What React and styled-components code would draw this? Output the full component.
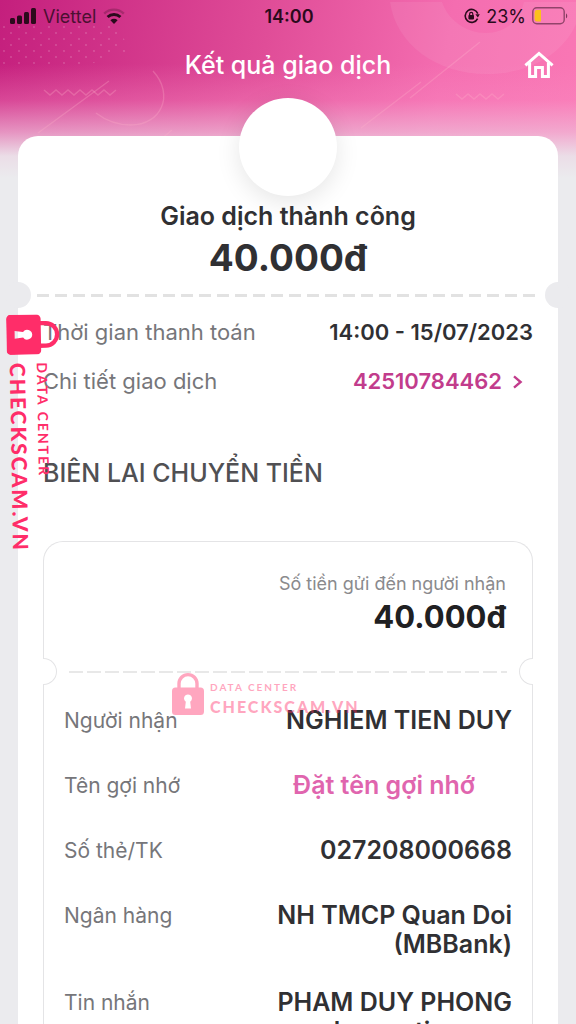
import React from "react";
import styled, { createGlobalStyle } from "styled-components";

const GlobalStyle = createGlobalStyle`
  * {
    box-sizing: border-box;
  }

  body {
    margin: 0;
    background: #ebebee;
    font-family: "Inter", "Roboto", sans-serif;
    color: #303033;
  }
`;

const receiptRows = [
  { label: "Người nhận", value: "NGHIEM TIEN DUY" },
  { label: "Tên gợi nhớ", action: "Đặt tên gợi nhớ" },
  { label: "Số thẻ/TK", value: "027208000668" },
  { label: "Ngân hàng", value: "NH TMCP Quan Doi (MBBank)" },
  { label: "Tin nhắn", value: "PHAM DUY PHONG chuyen tien qua MoMo" },
];

const SignalIcon = () => (
  <svg width="26" height="16" viewBox="0 0 26 16" fill="currentColor" aria-hidden="true">
    <rect x="0" y="10" width="5" height="6" rx="1.5" />
    <rect x="7" y="7.5" width="5" height="8.5" rx="1.5" />
    <rect x="14" y="4" width="5" height="12" rx="1.5" />
    <rect x="21" y="0" width="5" height="16" rx="1.5" />
  </svg>
);

const WifiIcon = () => (
  <svg width="22" height="16" viewBox="0 0 22 16" fill="none" stroke="currentColor" aria-hidden="true">
    <path d="M1.2 5.6a14 14 0 0 1 19.6 0" strokeWidth="2.4" opacity="0.25" />
    <path d="M4.6 9a9.2 9.2 0 0 1 12.8 0" strokeWidth="3" />
    <path d="M11 16l-3.6-3.8a5.2 5.2 0 0 1 7.2 0z" fill="currentColor" stroke="none" />
  </svg>
);

const RotationLockIcon = () => (
  <svg width="16" height="16" viewBox="0 0 16 16" fill="none" stroke="currentColor" aria-hidden="true">
    <path d="M13.6 10.6A6.5 6.5 0 1 1 13.8 5.6" strokeWidth="1.6" />
    <path d="M11.4 6.2h4.4l-2 3.4z" fill="currentColor" stroke="none" />
    <rect x="4.4" y="7" width="5.6" height="4.4" rx="0.8" fill="currentColor" stroke="none" />
    <path d="M5.6 7.4V6a1.6 1.6 0 0 1 3.2 0v1.4" strokeWidth="1.2" />
  </svg>
);

const BatteryIcon = () => (
  <svg width="36" height="18" viewBox="0 0 36 18" fill="none" aria-hidden="true">
    <rect x="0.8" y="0.8" width="31.4" height="16" rx="4" stroke="#2b0a1c" strokeOpacity="0.5" strokeWidth="1.4" />
    <path d="M5 3h4v11.6H5a2.4 2.4 0 0 1-2.4-2.4V5.4A2.4 2.4 0 0 1 5 3z" fill="#fbc11c" />
    <path d="M34 6.4c1.6.6 1.6 4.2 0 4.8z" fill="#2b0a1c" fillOpacity="0.6" />
  </svg>
);

const HomeIcon = () => (
  <svg width="30" height="28" viewBox="0 0 30 28" fill="none" stroke="currentColor" strokeWidth="3" aria-hidden="true">
    <path d="M1.4 14.4L15 2.4 28.6 14.4" />
    <path d="M5.6 11.4v14h6v-9h6.8v9h6v-14" />
  </svg>
);

const ChevronIcon = () => (
  <svg width="11" height="14" viewBox="0 0 11 14" fill="none" stroke="currentColor" strokeWidth="2.4" aria-hidden="true">
    <path d="M2 1.4L8.6 7 2 12.6" />
  </svg>
);

const LockIcon = () => (
  <LockSvg viewBox="0 0 32 43" aria-hidden="true">
    <path d="M7 17V11.6a9 9 0 0 1 18 0V17" fill="none" stroke="currentColor" strokeWidth="3.4" />
    <path
      fillRule="evenodd"
      fill="currentColor"
      d="M3.5 15.5h25a3.5 3.5 0 0 1 3.5 3.5V39.5a3.5 3.5 0 0 1-3.5 3.5H3.5A3.5 3.5 0 0 1 0 39.5V19a3.5 3.5 0 0 1 3.5-3.5zM16 22.4a4 4 0 0 0-2.2 7.3L13 36.4h6l-.8-6.7A4 4 0 0 0 16 22.4z"
    />
  </LockSvg>
);

const HeaderPattern = () => (
  <Pattern viewBox="0 0 576 176" preserveAspectRatio="xMidYMin slice" aria-hidden="true">
    <defs>
      <pattern id="dots" width="15" height="12" patternUnits="userSpaceOnUse">
        <circle cx="4" cy="3" r="0.9" fill="#fff" />
        <circle cx="11" cy="9" r="0.9" fill="#fff" />
      </pattern>
    </defs>
    <path d="M0 26h112l22 24-50 16H0z" fill="url(#dots)" opacity="0.2" />
    <g fill="none" stroke="#ffb3c8" strokeOpacity="0.28" strokeWidth="1.4">
      <path d="M153 71c22 24 8 54-22 54-14 0-26-5-35-12" />
      <path d="M109 81L38 133M172 130l-12 10M480 42l-70 56M421 82l-60 46" />
      <path d="M44 90l6 5 6-5 6 5 6-5 6 5 6-5 6 5 6-5 6 5 6-5 6 5 6-5" />
      <path d="M456 94l6 5 6-5 6 5 6-5 6 5 6-5 6 5 6-5" />
    </g>
    <path d="M390 2c6 42 46 72 97 72 42 0 76-20 89-50V2h-52c-4 18-18 31-38 31s-38-13-44-31z" fill="#fff" opacity="0.07" />
  </Pattern>
);

const Watermark = ({ vertical }) => (
  <Mark $vertical={vertical}>
    <LockIcon />
    <MarkText>
      <MarkTop $vertical={vertical}>DATA CENTER</MarkTop>
      <MarkName $vertical={vertical}>CHECKSCAM.VN</MarkName>
    </MarkText>
  </Mark>
);

const App = () => (
  <Screen>
    <GlobalStyle />
    <HeaderPattern />
    <StatusBar>
      <StatusGroup>
        <SignalIcon />
        <Carrier>Viettel</Carrier>
        <WifiIcon />
      </StatusGroup>
      <Clock>14:00</Clock>
      <StatusGroup $end>
        <RotationLockIcon />
        <span>23%</span>
        <BatteryIcon />
      </StatusGroup>
    </StatusBar>

    <TitleBar>
      <Title>Kết quả giao dịch</Title>
      <HomeButton type="button" aria-label="Trang chủ">
        <HomeIcon />
      </HomeButton>
    </TitleBar>

    <Card>
      <Avatar />
      <Status>Giao dịch thành công</Status>
      <Total>40.000đ</Total>
      <Tear>
        <Notch />
        <Dashes />
        <Notch />
      </Tear>

      <Details>
        <Row>
          <Label $large>Thời gian thanh toán</Label>
          <Value>14:00 - 15/07/2023</Value>
        </Row>
        <Row>
          <Label $large>Chi tiết giao dịch</Label>
          <Value>
            <DetailLink href="#detail">
              42510784462
              <ChevronIcon />
            </DetailLink>
          </Value>
        </Row>
      </Details>

      <SectionTitle>BIÊN LAI CHUYỂN TIỀN</SectionTitle>

      <Receipt>
        <SentLabel>Số tiền gửi đến người nhận</SentLabel>
        <SentAmount>40.000đ</SentAmount>
        <ReceiptTear>
          <OutlineNotch />
          <ThinDashes />
          <OutlineNotch $right />
        </ReceiptTear>
        <ReceiptList>
          {receiptRows.map((row) => (
            <ReceiptRow key={row.label}>
              <Label>{row.label}</Label>
              <Value $large>
                {row.action ? <NameButton type="button">{row.action}</NameButton> : row.value}
              </Value>
            </ReceiptRow>
          ))}
        </ReceiptList>
        <Watermark />
      </Receipt>
    </Card>
    <Watermark vertical />
  </Screen>
);

const Screen = styled.main`
  position: relative;
  height: 100vh;
  overflow: hidden auto;
  scrollbar-width: none;
  background:
    linear-gradient(
        to bottom,
        rgba(250, 130, 190, 0) 64px,
        rgba(250, 140, 195, 0.35) 100px,
        rgba(240, 185, 215, 0.75) 132px,
        #ebdde7 156px,
        #ebebee 178px
      )
      top / 100% 178px no-repeat,
    linear-gradient(100deg, #c41f7d 0%, #e04d98 45%, #f46db0 75%, #fa78b5 100%) top / 100% 177px no-repeat,
    #ebebee;
`;

const Pattern = styled.svg`
  position: absolute;
  top: 0;
  left: 0;
  width: 100%;
  height: 176px;
`;

const StatusBar = styled.div`
  position: relative;
  display: grid;
  grid-template-columns: 1fr auto 1fr;
  align-items: center;
  height: 32px;
  padding: 0 8px 0 10px;
  font-size: 18px;
  color: #2b0a1c;
`;

const StatusGroup = styled.div`
  display: flex;
  align-items: center;
  justify-content: ${({ $end }) => ($end ? "flex-end" : "flex-start")};
  gap: ${({ $end }) => ($end ? "6px" : "7px")};
`;

const Carrier = styled.span`
  opacity: 0.8;
`;

const Clock = styled.span`
  font-weight: 600;
`;

const TitleBar = styled.header`
  position: relative;
  display: grid;
  grid-template-columns: 1fr auto 1fr;
  align-items: center;
  height: 66px;
  padding: 0 22px;
  color: #fff;
`;

const Title = styled.h1`
  grid-column: 2;
  margin: 0;
  font-size: 25px;
  font-weight: 500;
`;

const HomeButton = styled.button`
  justify-self: end;
  display: flex;
  padding: 0;
  border: none;
  background: none;
  color: inherit;
  cursor: pointer;
`;

const Card = styled.section`
  position: relative;
  display: flex;
  flex-direction: column;
  margin: 38px 18px 0;
  border-radius: 20px 20px 0 0;
  background: #fff;
`;

const Avatar = styled.div`
  align-self: center;
  width: 98px;
  height: 98px;
  margin-top: -38px;
  border-radius: 50%;
  background: #fff;
  box-shadow: 0 6px 24px rgba(0, 0, 0, 0.1);
`;

const Status = styled.p`
  position: relative;
  margin: 4px 0 0;
  text-align: center;
  font-size: 25px;
  font-weight: 600;
  line-height: 32px;
`;

const Total = styled.p`
  margin: 4px 0 0;
  text-align: center;
  font-size: 37px;
  font-weight: 700;
  line-height: 44px;
`;

const Tear = styled.div`
  display: flex;
  align-items: center;
  justify-content: space-between;
  gap: 6px;
  margin: 2px -13px 0;
`;

const Notch = styled.span`
  width: 26px;
  height: 26px;
  border-radius: 50%;
  background: #ebebee;
`;

const Dashes = styled.span`
  flex: 1;
  height: 3px;
  background: repeating-linear-gradient(to right, #e2e2e2 0 12px, transparent 12px 18px);
`;

const Details = styled.dl`
  display: flex;
  flex-direction: column;
  gap: 20px;
  margin: 10px 25px 0;
`;

const Row = styled.div`
  display: flex;
  justify-content: space-between;
  line-height: 29px;
`;

const ReceiptRow = styled(Row)`
  min-height: 36px;
`;

const Label = styled.dt`
  font-size: ${({ $large }) => ($large ? "22px" : "21px")};
  color: #76767a;
`;

const Value = styled.dd`
  max-width: ${({ $large }) => ($large ? "60%" : "none")};
  margin: 0;
  text-align: right;
  font-size: ${({ $large }) => ($large ? "25px" : "22px")};
  font-weight: 600;
`;

const DetailLink = styled.a`
  display: flex;
  align-items: center;
  gap: 10px;
  padding-right: 10px;
  color: #c23c8c;
  text-decoration: none;
`;

const SectionTitle = styled.h2`
  margin: 61px 25px 0;
  font-size: 25px;
  font-weight: 500;
  line-height: 32px;
  color: #505053;
`;

const Receipt = styled.div`
  position: relative;
  display: flex;
  flex-direction: column;
  margin: 52px 25px 0;
  padding-top: 28px;
  border: 1px solid #e4e4e6;
  border-bottom: none;
  border-radius: 20px 20px 0 0;
`;

const SentLabel = styled.p`
  margin: 0 26px;
  text-align: right;
  font-size: 18px;
  line-height: 28px;
  color: #8a8a8d;
`;

const SentAmount = styled.p`
  margin: 0 26px;
  text-align: right;
  font-size: 31px;
  font-weight: 700;
  line-height: 38px;
  color: #202022;
`;

const ReceiptTear = styled.div`
  display: flex;
  align-items: center;
  justify-content: space-between;
  gap: 12px;
  margin: 22px -1px 0;
`;

const OutlineNotch = styled.span`
  width: 14px;
  height: 27px;
  border: 1px solid #e4e4e6;
  background: #fff;
  ${({ $right }) =>
    $right
      ? "border-right: none; border-radius: 14px 0 0 14px;"
      : "border-left: none; border-radius: 0 14px 14px 0;"}
`;

const ThinDashes = styled.span`
  flex: 1;
  height: 2px;
  background: repeating-linear-gradient(to right, #e8e8e8 0 14px, transparent 14px 18px);
`;

const ReceiptList = styled.dl`
  display: flex;
  flex-direction: column;
  gap: 29px;
  margin: 21px 20px 0;
`;

const NameButton = styled.button`
  margin-right: 37px;
  padding: 0;
  border: none;
  background: none;
  font: inherit;
  color: #e065ae;
  cursor: pointer;
`;

const Mark = styled.div`
  position: absolute;
  display: flex;
  gap: ${({ $vertical }) => ($vertical ? "8px" : "6px")};
  height: ${({ $vertical }) => ($vertical ? "54px" : "43px")};
  top: ${({ $vertical }) => ($vertical ? "314px" : "130px")};
  left: ${({ $vertical }) => ($vertical ? "60px" : "128px")};
  color: #ff2d69;
  opacity: ${({ $vertical }) => ($vertical ? 1 : 0.42)};
  transform-origin: 0 0;
  transform: ${({ $vertical }) => ($vertical ? "rotate(89deg)" : "none")};
  pointer-events: none;
`;

const LockSvg = styled.svg`
  display: block;
  height: 100%;
`;

const MarkText = styled.div`
  display: flex;
  flex-direction: column;
  justify-content: flex-end;
  font-family: "Lato", sans-serif;
  white-space: nowrap;
`;

const MarkTop = styled.span`
  font-size: ${({ $vertical }) => ($vertical ? "14px" : "10px")};
  font-weight: 700;
  line-height: ${({ $vertical }) => ($vertical ? "27px" : "24px")};
  letter-spacing: 2px;
`;

const MarkName = styled.span`
  font-size: ${({ $vertical }) => ($vertical ? "21px" : "16px")};
  font-weight: 900;
  line-height: ${({ $vertical }) => ($vertical ? "22px" : "16px")};
  letter-spacing: 2px;
`;

export default App;
